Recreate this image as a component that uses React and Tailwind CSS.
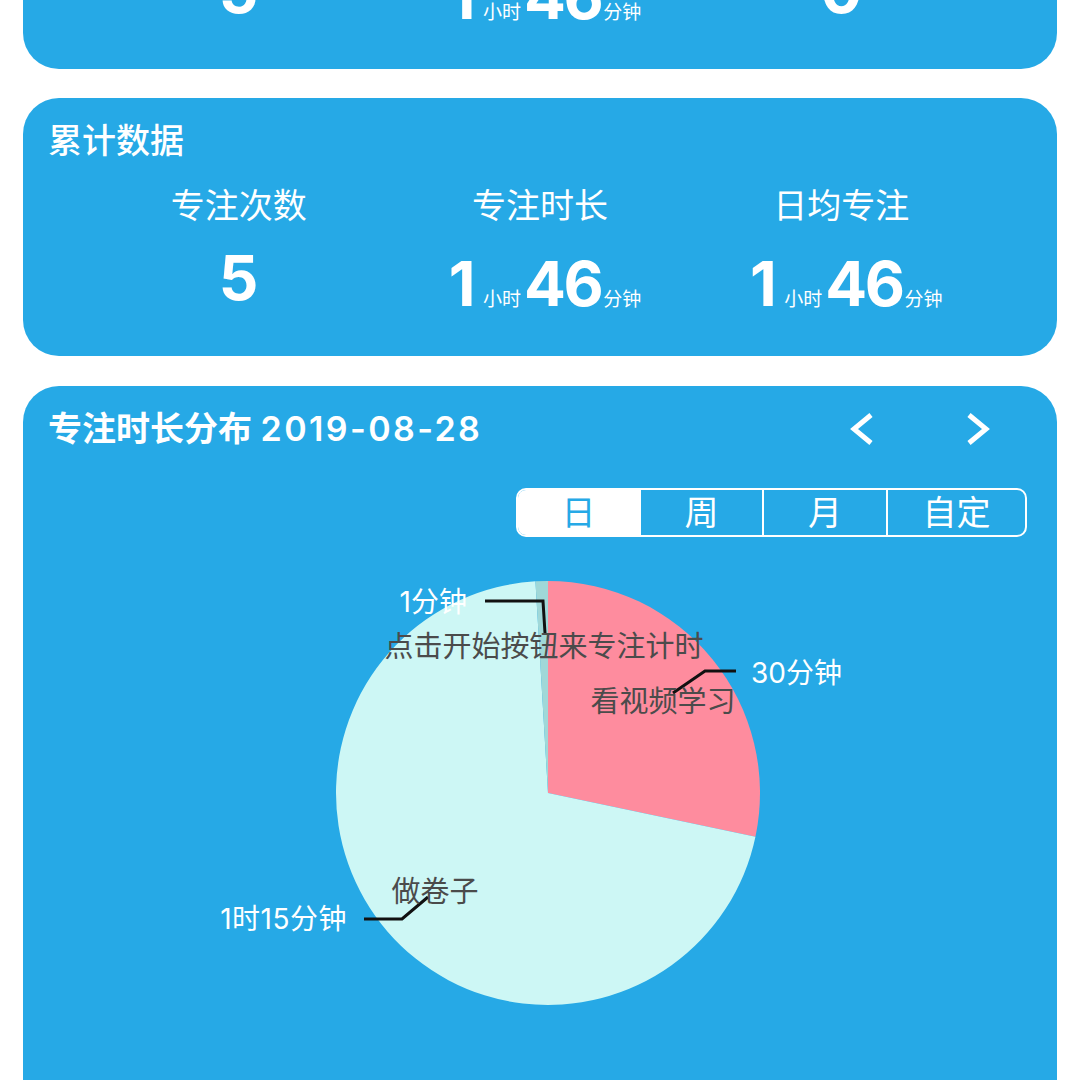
const font = "font-['Inter','Noto_Sans_CJK_SC',sans-serif]";

const Duration = ({ h, m }) => (
  <div className="flex items-baseline justify-center pt-[6px] pl-[10px] leading-[70px]">
    <span className="text-[62px] font-bold tracking-tight">{h}</span>
    <span className="text-[19px] ml-[9px] mr-[3px]">小时</span>
    <span className="text-[62px] font-bold tracking-[-2.5px]">{m}</span>
    <span className="text-[19px] ml-[2px]">分钟</span>
  </div>
);

const StatCard = ({ title, labels, values, className = '' }) => (
  <div className={`bg-[#26a9e6] rounded-[36px] h-[258px] pt-[26px] text-white ${className}`}>
    <div className="pl-[25px] text-[34px] leading-[34px] font-medium">{title}</div>
    <div className="grid grid-cols-3 px-[65px] mt-[28px]">
      {labels.map((label, i) => (
        <div key={label} className="flex flex-col items-center">
          <div className="text-[34px] leading-[40px]">{label}</div>
          <div className="mt-[17px] h-[70px]">{values[i]}</div>
        </div>
      ))}
    </div>
  </div>
);

const Chevron = ({ dir }) => (
  <svg width="24" height="34" viewBox="0 0 24 34" fill="none">
    <polyline
      points={dir === 'left' ? '21,3 4,17 21,31' : '3,3 20,17 3,31'}
      stroke="white"
      strokeWidth="5"
      strokeLinejoin="miter"
    />
  </svg>
);

const tabs = [
  { label: '日', w: 'w-[121px]' },
  { label: '周', w: 'w-[123px]' },
  { label: '月', w: 'w-[124px]' },
  { label: '自定', w: 'w-[139px]' },
];

// pie: center 548,793 r 212 (page coordinates, viewBox offset below)
const PieChart = () => (
  <svg width="1034" height="560" viewBox="23 550 1034 560" className="block">
    <path d="M548 793 L548 581 A212 212 0 0 1 755.45 836.67 Z" fill="#fe8c9e" />
    <path d="M548 793 L755.45 836.67 A212 212 0 1 1 535.44 581.37 Z" fill="#cdf7f5" />
    <path d="M548 793 L535.44 581.37 A212 212 0 0 1 548 581 Z" fill="#a0d8d8" />

    <polyline points="673,693 705,671 736,671" stroke="#111" strokeWidth="3" fill="none" />
    <polyline points="485,601 543,601 545,633" stroke="#111" strokeWidth="3" fill="none" />
    <polyline points="364,919 402,919 428,897" stroke="#111" strokeWidth="3" fill="none" />

    <g fontSize="28" fill="white" dominantBaseline="central">
      <text x="751" y="673">30分钟</text>
      <text x="467" y="602" textAnchor="end">1分钟</text>
      <text x="347" y="919" textAnchor="end" letterSpacing="0.5">1时15分钟</text>
    </g>
    <g fontSize="29" fill="#4b4b4b" dominantBaseline="central" textAnchor="middle">
      <text x="663" y="701">看视频学习</text>
      <text x="544" y="646">点击开始按钮来专注计时</text>
      <text x="435" y="891">做卷子</text>
    </g>
  </svg>
);

export default function App() {
  return (
    <div className={`${font} bg-white h-[1080px] overflow-hidden px-[23px] flex flex-col`}>
      <StatCard
        className="-mt-[189px] shrink-0"
        title="今日数据"
        labels={['专注次数', '专注时长', '日均专注']}
        values={[
          <div className="text-[62px] font-bold leading-[70px]">5</div>,
          <Duration h="1" m="46" />,
          <div className="text-[62px] font-bold leading-[70px]">0</div>,
        ]}
      />
      <StatCard
        className="mt-[29px] shrink-0"
        title="累计数据"
        labels={['专注次数', '专注时长', '日均专注']}
        values={[
          <div className="text-[62px] font-bold leading-[70px]">5</div>,
          <Duration h="1" m="46" />,
          <Duration h="1" m="46" />,
        ]}
      />

      <div className="mt-[30px] shrink-0 bg-[#26a9e6] rounded-[36px] pt-[26px] pb-[40px] text-white">
        <div className="flex items-center justify-between pl-[25px] pr-[67px] h-[34px]">
          <div className="text-[34px] leading-[34px] font-semibold">
            专注时长分布 <span className="tracking-[2.4px]">2019-08-28</span>
          </div>
          <div className="flex items-center gap-[92px]">
            <Chevron dir="left" />
            <Chevron dir="right" />
          </div>
        </div>

        <div className="flex justify-end pr-[30px] mt-[42px]">
          <div className="flex h-[49px] border-2 border-white rounded-[10px] overflow-hidden">
            {tabs.map((t, i) => (
              <div
                key={t.label}
                className={`${t.w} flex items-center justify-center text-[34px] leading-none ${
                  i === 0 ? 'bg-white text-[#26a9e6]' : 'border-l-2 border-white'
                }`}
              >
                {t.label}
              </div>
            ))}
          </div>
        </div>

        <div className="mt-[13px]">
          <PieChart />
        </div>
      </div>
    </div>
  );
}
